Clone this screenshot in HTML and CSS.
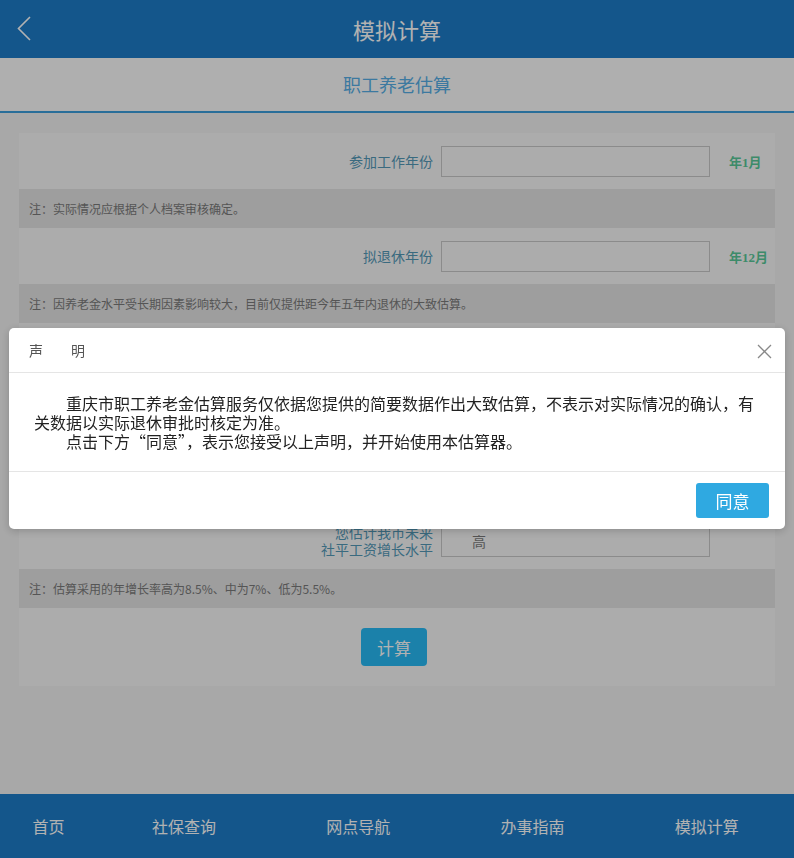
FILE: index.html
```html
<!DOCTYPE html>
<html lang="zh-CN">

<head>
    <meta charset="UTF-8">
    <meta name="viewport" content="width=device-width, initial-scale=1.0">
    <title>模拟计算</title>
    <link rel="stylesheet" href="styles.css">
</head>

<body>
    <div class="header">
        <a class="back" href="#">
            <svg width="14" height="25" viewBox="0 0 14 25"><polyline points="13,1 1.5,12.5 13,24" fill="none" stroke="#fff" stroke-width="1.6" /></svg>
        </a>
        <h1>模拟计算</h1>
    </div>
    <div class="subtitle">职工养老估算</div>

    <div class="main">
        <div class="card">
            <div class="row">
                <label>参加工作年份</label>
                <input type="text" class="ipt">
                <span class="unit">年1月</span>
            </div>
            <div class="note">注：实际情况应根据个人档案审核确定。</div>
            <div class="row">
                <label>拟退休年份</label>
                <input type="text" class="ipt">
                <span class="unit">年12月</span>
            </div>
            <div class="note">注：因养老金水平受长期因素影响较大，目前仅提供距今年五年内退休的大致估算。</div>
            <div class="row">
                <label>缴费工资指数</label>
                <input type="text" class="ipt">
                <span class="unit"></span>
            </div>
            <div class="note">注：指数按本人历年缴费基数与社平工资比值计算。</div>
            <div class="row">
                <label>个人账户余额</label>
                <input type="text" class="ipt">
                <span class="unit">元</span>
            </div>
            <div class="note">注：以社保机构记录为准。</div>
            <div class="row">
                <label>您估计我市未来<br>社平工资增长水平</label>
                <select class="ipt sel">
                    <option>高</option>
                    <option>中</option>
                    <option>低</option>
                </select>
                <span class="unit"></span>
            </div>
            <div class="note">注：估算采用的年增长率高为8.5%、中为7%、低为5.5%。</div>
            <div class="btn-row">
                <button class="btn">计算</button>
            </div>
        </div>
    </div>

    <div class="footer">
        <a href="#">首页</a>
        <a href="#">社保查询</a>
        <a href="#">网点导航</a>
        <a href="#">办事指南</a>
        <a href="#">模拟计算</a>
    </div>

    <div class="mask"></div>
    <div class="dialog">
        <div class="dialog-hd">
            <span class="dialog-title">声　　明</span>
            <span class="close">
                <svg width="15" height="15" viewBox="0 0 15 15"><path d="M1 1L14 14M14 1L1 14" stroke="#888" stroke-width="1.3" /></svg>
            </span>
        </div>
        <div class="dialog-bd">
            <p>重庆市职工养老金估算服务仅依据您提供的简要数据作出大致估算，不表示对实际情况的确认，有关数据以实际退休审批时核定为准。</p>
            <p>点击下方“同意”，表示您接受以上声明，并开始使用本估算器。</p>
        </div>
        <div class="dialog-ft">
            <button class="btn-ok">同意</button>
        </div>
    </div>
</body>

</html>
```

FILE: styles.css
```css
* {
    box-sizing: border-box;
}

body {
    margin: 0;
    height: 858px;
    background-color: #f1f1f1;
    font-family: "Microsoft YaHei", "Noto Sans CJK SC", "Noto Sans", sans-serif;
}

.header {
    position: relative;
    height: 58px;
    background-color: #1e7cc8;
    text-align: center;
}

.header h1 {
    margin: 0;
    line-height: 58px;
    font-size: 22px;
    font-weight: normal;
    color: #fff;
}

.back {
    position: absolute;
    left: 17px;
    top: 16px;
}

.subtitle {
    height: 55px;
    line-height: 53px;
    background-color: #fbfbfb;
    border-bottom: 2px solid #3c9edb;
    text-align: center;
    font-size: 18px;
    color: #57aee5;
}

.main {
    padding: 20px 19px;
}

.card {
    background-color: #f7f7f7;
}

.row {
    display: grid;
    grid-template-columns: 1fr 269px 65px;
    align-items: center;
    height: 56px;
}

.row label {
    padding-right: 8px;
    text-align: right;
    font-size: 14px;
    line-height: 17px;
    color: #5399b7;
}

.ipt {
    height: 31px;
    border: 1px solid #c8c8c8;
    background-color: #f7f7f7;
    font-size: 14px;
    outline: none;
}

.sel {
    appearance: none;
    -webkit-appearance: none;
    padding-left: 30px;
    color: #7a7a7a;
    font-family: inherit;
    border-radius: 0;
}

.unit {
    padding-left: 19px;
    font-family: "Liberation Serif", "Noto Sans CJK SC", serif;
    font-size: 13px;
    font-weight: bold;
    color: #58c898;
}

.note {
    height: 39px;
    line-height: 39px;
    padding-left: 10px;
    background-color: #e2e2e2;
    font-size: 12px;
    color: #7a7a7a;
}

.btn-row {
    display: flex;
    justify-content: center;
    padding: 20px 6px 20px 0;
}

.btn {
    width: 66px;
    height: 38px;
    border: 0;
    border-radius: 4px;
    background-color: #27b9f4;
    color: #fff;
    font-size: 17px;
    font-family: inherit;
}

.footer {
    position: fixed;
    left: 0;
    right: 0;
    bottom: 0;
    display: grid;
    grid-template-columns: 97px repeat(4, 1fr);
    height: 64px;
    background-color: #1e7cc8;
}

.footer a {
    line-height: 64px;
    text-align: center;
    font-size: 16px;
    color: #fff;
    text-decoration: none;
}

.mask {
    position: fixed;
    top: 0;
    left: 0;
    right: 0;
    bottom: 0;
    background-color: rgba(0, 0, 0, .3);
}

.dialog {
    position: fixed;
    top: 328px;
    left: 9px;
    right: 9px;
    background-color: #fff;
    border-radius: 5px;
    box-shadow: 0 2px 8px rgba(0, 0, 0, .2);
}

.dialog-hd {
    display: flex;
    justify-content: space-between;
    align-items: center;
    height: 45px;
    padding: 0 13px 0 20px;
    border-bottom: 1px solid #e5e5e5;
}

.dialog-title {
    font-size: 14px;
    color: #555;
}

.close {
    display: flex;
    padding-top: 2px;
}

.dialog-bd {
    padding: 21px 25px 20px;
    border-bottom: 1px solid #e5e5e5;
}

.dialog-bd p {
    margin: 0;
    text-indent: 2em;
    font-size: 16px;
    line-height: 19px;
    color: #222;
}

.dialog-ft {
    display: flex;
    justify-content: flex-end;
    padding: 11px 16px;
}

.btn-ok {
    width: 73px;
    height: 35px;
    border: 0;
    border-radius: 3px;
    background-color: #2fa9e1;
    color: #fff;
    font-size: 17px;
    font-family: inherit;
}
```
